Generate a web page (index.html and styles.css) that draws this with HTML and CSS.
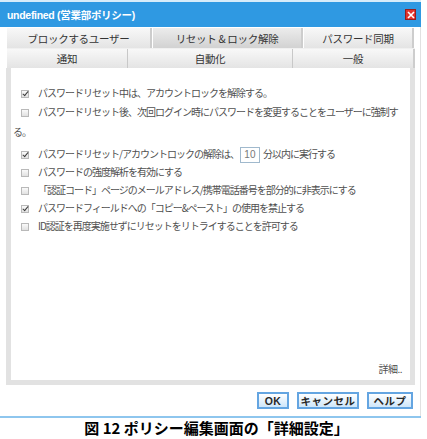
FILE: index.html
```html
<!DOCTYPE html>
<html lang="ja">

<head>
    <meta charset="UTF-8">
    <meta name="viewport" content="width=device-width, initial-scale=1.0">
    <title>ポリシー編集</title>
    <link rel="stylesheet" href="styles.css">
</head>

<body>
    <div class="dialog">
        <div class="titlebar">
            <span class="title">undefined (営業部ポリシー)</span>
            <span class="close">
                <svg width="8" height="8" viewBox="0 0 8 8"><path d="M1 1L7 7M7 1L1 7" stroke="#fff" stroke-width="1.6"/></svg>
            </span>
        </div>
        <div class="body">
            <div class="tabs row1">
                <div class="tab t-block">ブロックするユーザー</div>
                <div class="tab t-reset active">リセット &amp; ロック解除</div>
                <div class="tab t-sync">パスワード同期</div>
            </div>
            <div class="tabs row2">
                <div class="tab t-notify">通知</div>
                <div class="tab t-auto">自動化</div>
                <div class="tab t-general">一般</div>
            </div>
            <div class="panel">
                <div class="opts">
                    <div class="opt"><span class="box checked"></span>パスワードリセット中は、アカウントロックを解除する。</div>
                    <div class="opt wrap"><span class="box"></span>パスワードリセット後、次回ログイン時にパスワードを変更することをユーザーに強制する。</div>
                    <div class="opt timed"><span class="box checked"></span>パスワードリセット/アカウントロックの解除は、<span class="num">10</span>分以内に実行する</div>
                    <div class="opt"><span class="box"></span>パスワードの強度解析を有効にする</div>
                    <div class="opt"><span class="box"></span>「認証コード」ページのメールアドレス/携帯電話番号を部分的に非表示にする</div>
                    <div class="opt"><span class="box checked"></span>パスワードフィールドへの「コピー&amp;ペースト」の使用を禁止する</div>
                    <div class="opt"><span class="box"></span>ID認証を再度実施せずにリセットをリトライすることを許可する</div>
                </div>
                <div class="more">詳細..</div>
            </div>
            <div class="buttons">
                <button class="btn b-ok">OK</button>
                <button class="btn b-cancel">キャンセル</button>
                <button class="btn b-help">ヘルプ</button>
            </div>
        </div>
    </div>
    <p class="caption">図 12 ポリシー編集画面の「詳細設定」</p>
</body>

</html>
```

FILE: styles.css
```css
body {
    background-color: rgb(255, 255, 255);
    color: rgb(80, 80, 80);
    font-family: "Noto Sans CJK JP", "Noto Sans", sans-serif;
    margin: 0;
    padding: 0;
}

.dialog {
    border-top: 2px solid rgb(214, 236, 250);
    border-bottom: 2px solid rgb(142, 198, 238);
    width: 421px;
}

.titlebar {
    align-items: center;
    background-color: rgb(47, 153, 226);
    display: flex;
    height: 25px;
    justify-content: space-between;
    padding: 0 5px 0 7px;
}

.title {
    color: rgb(255, 255, 255);
    font-family: "Liberation Sans", "Noto Sans CJK JP", sans-serif;
    font-size: 10.5px;
    font-weight: bold;
    letter-spacing: -0.3px;
}

.close {
    align-items: center;
    background-color: rgb(226, 52, 45);
    border: 1px solid rgb(150, 30, 30);
    display: flex;
    height: 9px;
    justify-content: center;
    width: 9px;
}

.body {
    border-right: 1px solid rgb(225, 225, 225);
    padding: 1px 5px 0 6px;
}

.tabs {
    display: flex;
    font-size: 10.5px;
    margin-left: 1px;
    width: 408px;
}

.tab {
    align-items: center;
    background: linear-gradient(rgb(248, 248, 248), rgb(228, 228, 228));
    color: rgb(51, 51, 51);
    display: flex;
    justify-content: center;
    letter-spacing: -0.3px;
}

.row1 {
    height: 20px;
}

.row1 .tab {
    border-right: 2px solid rgb(205, 205, 205);
    margin-right: 1px;
}

.row1 .tab.active {
    background: linear-gradient(rgb(236, 236, 236), rgb(210, 210, 210));
}

.t-block {
    width: 143px;
}

.t-reset {
    width: 148px;
}

.t-sync {
    flex: 1;
}

.row2 {
    border-top: 1px solid rgb(240, 240, 240);
    height: 19px;
}

.row2 .tab {
    border-right: 1px solid rgb(200, 200, 200);
}

.row2 .tab:last-child {
    border-right: 2px solid rgb(205, 205, 205);
}

.t-notify {
    width: 120px;
}

.t-auto {
    width: 164px;
}

.t-general {
    flex: 1;
}

.panel {
    border: 5px solid rgb(226, 226, 226);
    border-top: none;
    box-sizing: border-box;
    display: flex;
    flex-direction: column;
    height: 317px;
    padding: 15px 7px 4px 2px;
    width: 409px;
}

.opts {
    font-size: 10px;
    letter-spacing: -1px;
}

.opt {
    line-height: 19px;
}

.opt.wrap {
    line-height: 19.5px;
}

.opt.timed {
    margin-top: 3px;
}

.opt.timed ~ .opt {
    line-height: 18px;
}

.box {
    background: linear-gradient(rgb(250, 250, 250), rgb(225, 225, 225));
    border: 1px solid rgb(185, 185, 185);
    box-sizing: border-box;
    display: inline-block;
    height: 8px;
    margin: 0 9px 0 8px;
    position: relative;
    vertical-align: -0.5px;
    width: 8px;
}

.box.checked::after {
    border-bottom: 1.5px solid rgb(60, 60, 60);
    border-right: 1.5px solid rgb(60, 60, 60);
    content: "";
    height: 5px;
    left: 2px;
    position: absolute;
    top: -1px;
    transform: rotate(40deg);
    width: 2px;
}

.num {
    border: 1px solid rgb(160, 185, 205);
    color: rgb(120, 120, 120);
    display: inline-block;
    font-family: "Liberation Sans", sans-serif;
    height: 14px;
    letter-spacing: 0;
    line-height: 14px;
    margin: 0 3px 0 1px;
    text-align: center;
    vertical-align: middle;
    width: 18px;
}

.more {
    font-size: 10px;
    letter-spacing: -0.5px;
    margin-top: auto;
    padding-right: 1px;
    text-align: right;
}

.buttons {
    box-sizing: border-box;
    display: flex;
    gap: 8px;
    height: 31px;
    justify-content: flex-end;
    padding: 7px 2px 0 0;
}

.btn {
    background: linear-gradient(rgb(255, 255, 255), rgb(206, 230, 250));
    border: 2px solid rgb(100, 165, 225);
    color: rgb(40, 40, 40);
    font-family: "Noto Sans CJK JP", sans-serif;
    font-size: 10.5px;
    font-weight: bold;
    height: 17px;
    letter-spacing: 0.5px;
    line-height: 12px;
    padding: 0;
    white-space: nowrap;
}

.b-ok {
    font-family: "Liberation Sans", sans-serif;
    width: 32px;
}

.b-cancel {
    width: 62px;
}

.b-help {
    width: 46px;
}

.caption {
    color: rgb(0, 0, 0);
    font-size: 15px;
    font-weight: bold;
    line-height: 18px;
    margin: 1px 0 0 0;
    text-align: center;
    width: 433px;
}
```
